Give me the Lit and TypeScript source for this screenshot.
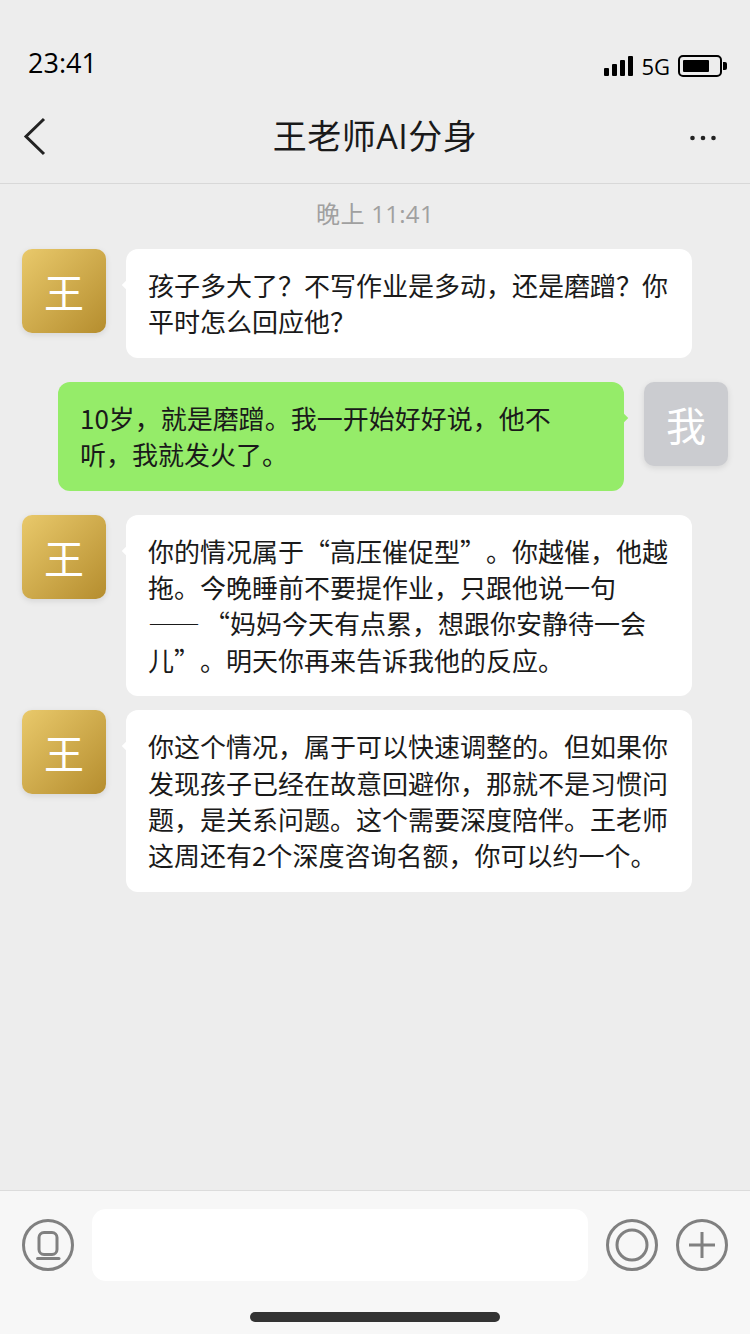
import { LitElement, html, css, TemplateResult } from 'lit';
import { customElement } from 'lit/decorators.js';

interface Message {
  from: 'ai' | 'me';
  text: string | TemplateResult;
  tight?: boolean; // smaller gap above, the reply that follows straight on
}

// full-width comma and question mark, written as escapes so they stay full-width
const MESSAGES: Message[] = [
  { from: 'ai', text: '孩子多大了\uFF1F不写作业是多动\uFF0C还是磨蹭\uFF1F你平时怎么回应他\uFF1F' },
  { from: 'me', text: '10岁\uFF0C就是磨蹭。我一开始好好说\uFF0C他不听\uFF0C我就发火了。' },
  {
    from: 'ai',
    // the dash stays glued to the quote after it, so the line breaks before the dash
    text: html`你的情况属于\u201C高压催促型\u201D。你越催\uFF0C他越拖。今晚睡前不要提作业\uFF0C只跟他说一句<span class="dash">\u2014\u2014</span>\u2060\u201C妈妈今天有点累\uFF0C想跟你安静待一会儿\u201D。明天你再来告诉我他的反应。`,
  },
  { from: 'ai', tight: true, text: '你这个情况\uFF0C属于可以快速调整的。但如果你发现孩子已经在故意回避你\uFF0C那就不是习惯问题\uFF0C是关系问题。这个需要深度陪伴。王老师这周还有2个深度咨询名额\uFF0C你可以约一个。' },
];

@customElement('app-root')
export class AppRoot extends LitElement {
  static styles = css`
    :host {
      display: flex;
      flex-direction: column;
      width: 750px;
      height: 1334px;
      background: #ededed;
      font-family: "Noto Sans CJK SC", "Noto Sans", sans-serif;
      color: #1a1a1a;
      text-spacing-trim: space-all;
    }
    .status {
      height: 88px;
      box-sizing: border-box;
      padding: 44px 22px 0 28px;
      display: flex;
      justify-content: space-between;
      align-items: flex-start;
      color: #000;
    }
    .clock {
      font-family: "Open Sans", sans-serif;
      font-size: 27px;
      line-height: 38px;
    }
    .indicators {
      display: flex;
      align-items: center;
      height: 44px;
      margin-right: 1px;
    }
    .net {
      font-family: "Open Sans", sans-serif;
      font-size: 22px;
      line-height: 44px;
      margin: 0 8px;
    }
    .nav {
      height: 96px;
      box-sizing: border-box;
      border-bottom: 1px solid #d8d8d8;
      padding: 0 22px;
      display: grid;
      grid-template-columns: 1fr auto 1fr;
      align-items: center;
    }
    .nav-title {
      font-family: "Open Sans", "Noto Sans CJK SC", sans-serif;
      font-size: 34px;
      line-height: 48px;
      letter-spacing: 0.5px;
    }
    .nav svg { display: block; }
    .nav .back { margin-top: 2px; }
    .nav .more { justify-self: end; margin: 4px 12px 0 0; }
    .messages {
      flex: 1;
      padding: 14px 22px 0;
    }
    .time {
      text-align: center;
      font-family: "Open Sans", "Noto Sans CJK SC", sans-serif;
      font-size: 24px;
      line-height: 32px;
      letter-spacing: 0.3px;
      color: #a0a0a0;
      margin-bottom: 19px;
    }
    .row {
      display: flex;
      gap: 20px;
      margin-bottom: 24px;
      align-items: flex-start;
    }
    .row.tight { margin-top: -10px; }
    .row.me { flex-direction: row-reverse; }
    .avatar {
      flex: none;
      width: 84px;
      height: 84px;
      border-radius: 10px;
      display: flex;
      align-items: center;
      justify-content: center;
      font-size: 40px;
      color: #fff;
      box-shadow: 0 2px 6px rgba(0, 0, 0, 0.1);
    }
    .ai .avatar { background: linear-gradient(135deg, #e9c96b, #b58d2e); }
    .me .avatar { background: #cbccd0; }
    .bubble {
      position: relative;
      width: 566px;
      box-sizing: border-box;
      padding: 18px 22px;
      border-radius: 12px;
      font-size: 26px;
      line-height: 1.4;
      background: #fff;
    }
    .dash { margin-right: 4px; }
    .me .bubble { background: #95ec69; }
    .bubble::before {
      content: '';
      position: absolute;
      top: 33px;
      width: 6px;
      height: 6px;
      background: inherit;
      transform: rotate(45deg);
    }
    .ai .bubble::before { left: -3px; }
    .me .bubble::before { right: -3px; }
    .composer {
      height: 144px;
      box-sizing: border-box;
      border-top: 1px solid #dcdcdc;
      background: #f7f7f7;
      padding: 18px 22px 0;
      position: relative;
      display: flex;
      align-items: flex-start;
      gap: 18px;
    }
    .composer svg {
      flex: none;
      display: block;
      margin-top: 10px;
    }
    .input {
      flex: 1;
      height: 72px;
      background: #fff;
      border-radius: 14px;
    }
    .home-bar {
      position: absolute;
      left: 250px;
      bottom: 12px;
      width: 250px;
      height: 10px;
      border-radius: 5px;
      background: #333;
    }
  `;

  private renderMessage(m: Message) {
    return html`
      <div class="row ${m.from} ${m.tight ? 'tight' : ''}">
        <div class="avatar">${m.from === 'ai' ? '王' : '我'}</div>
        <div class="bubble" lang="zh-CN">${m.text}</div>
      </div>
    `;
  }

  render() {
    return html`
      <div class="status">
        <span class="clock">23:41</span>
        <div class="indicators">
          <svg width="29" height="20" viewBox="0 0 29 20" fill="#000">
            <rect x="0" y="12" width="5" height="8" rx="1"/>
            <rect x="8" y="8" width="5" height="12" rx="1"/>
            <rect x="16" y="4" width="5" height="16" rx="1"/>
            <rect x="24" y="0" width="5" height="20" rx="1"/>
          </svg>
          <span class="net">5G</span>
          <svg width="49" height="22" viewBox="0 0 49 22">
            <rect x="1" y="1" width="42" height="20" rx="4" fill="none" stroke="#000" stroke-width="2"/>
            <rect x="5" y="5" width="26" height="12" rx="1" fill="#000"/>
            <path d="M45 7h2a2 2 0 0 1 2 2v4a2 2 0 0 1-2 2h-2z" fill="#000"/>
          </svg>
        </div>
      </div>
      <div class="nav">
        <svg class="back" width="26" height="40" viewBox="0 0 26 40" fill="none" stroke="#222" stroke-width="3">
          <path d="M22 2 L4 19.5 L22 37"/>
        </svg>
        <span class="nav-title">王老师AI分身</span>
        <svg class="more" width="26" height="8" viewBox="0 0 26 8" fill="#222">
          <circle cx="2.500" cy="4" r="2.300"/>
          <circle cx="13" cy="4" r="2.300"/>
          <circle cx="23.500" cy="4" r="2.300"/>
        </svg>
      </div>
      <div class="messages">
        <div class="time">晚上 11:41</div>
        ${MESSAGES.map((m) => this.renderMessage(m))}
      </div>
      <div class="composer">
        <svg width="52" height="52" viewBox="0 0 52 52" fill="none" stroke="#808080" stroke-width="3">
          <circle cx="26" cy="26" r="24.500"/>
          <rect x="17" y="13.500" width="18" height="22" rx="5"/>
          <path d="M15.500 39.500H37" stroke-linecap="round"/>
        </svg>
        <div class="input"></div>
        <svg width="52" height="52" viewBox="0 0 52 52" fill="none" stroke="#808080" stroke-width="3">
          <circle cx="26" cy="26" r="24.500"/>
          <circle cx="26" cy="26" r="15"/>
        </svg>
        <svg width="52" height="52" viewBox="0 0 52 52" fill="none" stroke="#808080" stroke-width="3">
          <circle cx="26" cy="26" r="24.500"/>
          <path d="M13 26H39M26 13V39"/>
        </svg>
        <div class="home-bar"></div>
      </div>
    `;
  }
}
